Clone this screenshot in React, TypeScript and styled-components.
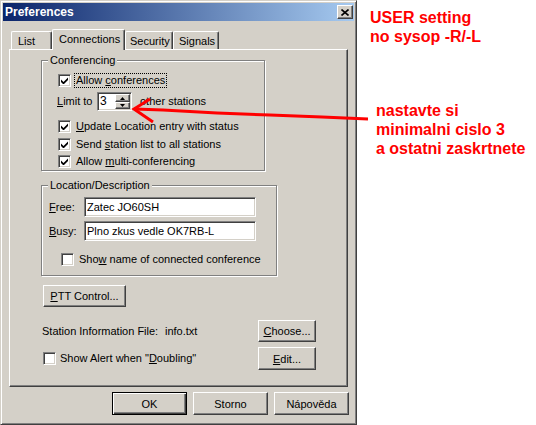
import React from "react";
import styled, { createGlobalStyle, css } from "styled-components";

const face = "#d4d0c8";

const GlobalStyle = createGlobalStyle`
  html, body {
    margin: 0;
    padding: 0;
    background: #fff;
  }
  body {
    font-family: "Liberation Sans", Arial, sans-serif;
    font-size: 11px;
    color: #000;
  }
`;

const raised = css`
  border: 1px solid;
  border-color: #fff #404040 #404040 #fff;
  box-shadow: inset -1px -1px 0 #808080;
`;

const sunken = css`
  border: 1px solid;
  border-color: #808080 #fff #fff #808080;
  box-shadow: inset 1px 1px 0 #404040, inset -1px -1px 0 ${face};
`;

const Page = styled.div`
  position: relative;
  display: flex;
  width: 536px;
  height: 425px;
  overflow: hidden;
`;

const Window = styled.div`
  box-sizing: border-box;
  width: 357px;
  height: 425px;
  flex: none;
  padding: 2px;
  background: ${face};
  border: 1px solid;
  border-color: ${face} #404040 #404040 ${face};
  box-shadow: inset 1px 1px 0 #fff, inset -1px -1px 0 #808080;
  display: flex;
  flex-direction: column;
`;

const TitleBar = styled.div`
  height: 18px;
  display: flex;
  align-items: center;
  justify-content: space-between;
  padding: 0 1px 0 2px;
  background: linear-gradient(to right, #0a246a, #a6caf0);
`;

const Title = styled.span`
  color: #fff;
  font-weight: bold;
  font-size: 12px;
`;

const CloseButton = styled.div`
  box-sizing: border-box;
  width: 16px;
  height: 14px;
  background: ${face};
  ${raised};
  display: flex;
  align-items: center;
  justify-content: center;
`;

const Body = styled.div`
  display: flex;
  flex-direction: column;
  padding: 8px 6px 0 6px;
`;

const TabStrip = styled.div`
  display: flex;
  align-items: flex-end;
  height: 20px;
  padding-left: 2px;
`;

const Tab = styled.div<{ $w: number; $active?: boolean; $pad: number }>`
  box-sizing: border-box;
  width: ${(p) => p.$w}px;
  height: ${(p) => (p.$active ? 21 : 18)}px;
  margin-bottom: ${(p) => (p.$active ? -1 : 0)}px;
  position: relative;
  z-index: ${(p) => (p.$active ? 1 : 0)};
  padding-left: ${(p) => p.$pad}px;
  padding-bottom: ${(p) => (p.$active ? 2 : 0)}px;
  display: flex;
  align-items: center;
  background: ${face};
  border-top: 1px solid #fff;
  border-left: 1px solid #fff;
  border-right: 1px solid #404040;
  box-shadow: inset -1px 0 0 #808080;
  border-radius: 2px 2px 0 0;
`;

const Panel = styled.div`
  box-sizing: border-box;
  height: 338px;
  padding: 10px 0 0 31px;
  display: flex;
  flex-direction: column;
  align-items: flex-start;
  border-top: 1px solid #fff;
  border-left: 1px solid #fff;
  border-right: 1px solid #404040;
  border-bottom: 1px solid #404040;
  box-shadow: inset -1px -1px 0 #808080;
`;

const GroupBox = styled.div<{ $w: number; $h: number; $top?: number }>`
  position: relative;
  box-sizing: border-box;
  width: ${(p) => p.$w}px;
  height: ${(p) => p.$h}px;
  margin-top: ${(p) => p.$top ?? 0}px;
  border: 1px solid #808080;
  box-shadow: inset 1px 1px 0 #fff, 1px 1px 0 #fff;
  display: flex;
  flex-direction: column;
  align-items: flex-start;
`;

const Legend = styled.span`
  position: absolute;
  top: -7px;
  left: 6px;
  padding: 0 2px;
  line-height: 13px;
  background: ${face};
`;

const ConfBody = styled.div`
  padding: 13px 0 0 16px;
  display: flex;
  flex-direction: column;
  align-items: flex-start;
`;

const Row = styled.div<{ $top?: number; $left?: number; $gap?: number }>`
  display: flex;
  align-items: center;
  min-height: 13px;
  margin-top: ${(p) => p.$top ?? 0}px;
  margin-left: ${(p) => p.$left ?? 0}px;
  gap: ${(p) => p.$gap ?? 5}px;
  line-height: 13px;
  white-space: nowrap;
`;

const Focus = styled.span`
  outline: 1px dotted #000;
  outline-offset: 0;
  padding: 0 1px;
  margin-left: -1px;
  line-height: 13px;
`;

const Box = styled.span`
  box-sizing: border-box;
  width: 13px;
  height: 13px;
  flex: none;
  background: #fff;
  ${sunken};
  display: flex;
  align-items: center;
  justify-content: center;
`;

const LimitLabel = styled.span`
  width: 40px;
  margin-left: -1px;
`;

const Spin = styled.div`
  box-sizing: border-box;
  width: 35px;
  height: 19px;
  background: #fff;
  ${sunken};
  display: flex;
  align-items: stretch;
  margin-right: 8px;
`;

const SpinValue = styled.span`
  flex: 1;
  padding-left: 2px;
  font-size: 12px;
  display: flex;
  align-items: center;
`;

const SpinButtons = styled.div`
  display: flex;
  flex-direction: column;
  width: 15px;
  margin: 1px 1px 1px 0;
`;

const SpinButton = styled.div<{ $h: number }>`
  box-sizing: border-box;
  height: ${(p) => p.$h}px;
  background: ${face};
  ${raised};
  display: flex;
  align-items: center;
  justify-content: center;
`;

const LocBody = styled.div`
  padding: 11px 0 0 7px;
  display: flex;
  flex-direction: column;
  align-items: flex-start;
`;

const FieldRow = styled.div<{ $top?: number }>`
  display: flex;
  align-items: center;
  margin-top: ${(p) => p.$top ?? 0}px;
`;

const FieldLabel = styled.span`
  width: 35px;
`;

const TextField = styled.input`
  box-sizing: border-box;
  width: 172px;
  height: 20px;
  margin: 0;
  padding: 0 2px;
  background: #fff;
  ${sunken};
  font-family: "Liberation Sans", Arial, sans-serif;
  font-size: 11px;
  color: #000;
  outline: none;
`;

const Button = styled.button<{ $w: number; $h: number; $top?: number; $left?: number; $default?: boolean }>`
  box-sizing: border-box;
  width: ${(p) => p.$w}px;
  height: ${(p) => p.$h}px;
  margin: ${(p) => p.$top ?? 0}px 0 0 ${(p) => p.$left ?? 0}px;
  padding: 0;
  background: ${face};
  font-family: "Liberation Sans", Arial, sans-serif;
  font-size: 11px;
  color: #000;
  ${(p) =>
    p.$default
      ? css`
          border: 1px solid #000;
          box-shadow: inset 1px 1px 0 #fff, inset -1px -1px 0 #404040, inset -2px -2px 0 #808080;
        `
      : raised};
`;

const ActionRow = styled.div<{ $top: number; $h: number }>`
  display: grid;
  grid-template-columns: 217px 58px;
  align-items: center;
  height: ${(p) => p.$h}px;
  margin-top: ${(p) => p.$top}px;
`;

const InfoLine = styled.div`
  display: flex;
  margin-left: 1px;
`;

const InfoLabel = styled.span`
  width: 123px;
`;

const Footer = styled.div`
  display: flex;
  justify-content: flex-end;
  gap: 6px;
  margin: 5px -1px 0 0;
`;

const Notes = styled.div`
  flex: 1;
  padding: 8px 0 0 13px;
  color: #f00;
  font-family: "Liberation Sans", Arial, sans-serif;
  font-weight: bold;
  font-size: 16px;
  line-height: 19px;
`;

const Note = styled.div<{ $top?: number; $left?: number }>`
  margin-top: ${(p) => p.$top ?? 0}px;
  margin-left: ${(p) => p.$left ?? 0}px;
  white-space: nowrap;
`;

const Overlay = styled.svg`
  position: absolute;
  left: 0;
  top: 0;
  pointer-events: none;
`;

const Check = () => (
  <svg width="7" height="7" viewBox="0 0 7 7">
    <polygon points="0,2.5 2.5,5 7,0.5 7,3 2.5,7.5 0,5" fill="#000" />
  </svg>
);

const Checkbox = ({ checked }: { checked?: boolean }) => <Box>{checked && <Check />}</Box>;

const Arrow = ({ up }: { up?: boolean }) => (
  <svg width="5" height="3" viewBox="0 0 5 3">
    <polygon points={up ? "2.5,0 5,3 0,3" : "0,0 5,0 2.5,3"} fill="#000" />
  </svg>
);

export default function App() {
  return (
    <Page>
      <GlobalStyle />
      <Window>
        <TitleBar>
          <Title>Preferences</Title>
          <CloseButton>
            <svg width="8" height="7" viewBox="0 0 8 7">
              <path d="M0.5 0.5 L7.5 6.5 M7.5 0.5 L0.5 6.5" stroke="#000" strokeWidth="1.6" />
            </svg>
          </CloseButton>
        </TitleBar>
        <Body>
          <TabStrip>
            <Tab $w={41} $pad={6}>List</Tab>
            <Tab $w={73} $pad={6} $active>Connections</Tab>
            <Tab $w={48} $pad={4}>Security</Tab>
            <Tab $w={46} $pad={5}>Signals</Tab>
          </TabStrip>
          <Panel>
            <GroupBox $w={224} $h={111}>
              <Legend>Conferencing</Legend>
              <ConfBody>
                <Row>
                  <Checkbox checked />
                  <Focus>
                    Allow <u>c</u>onferences
                  </Focus>
                </Row>
                <Row $top={5} $gap={0}>
                  <LimitLabel>
                    <u>L</u>imit to
                  </LimitLabel>
                  <Spin>
                    <SpinValue>3</SpinValue>
                    <SpinButtons>
                      <SpinButton $h={8}>
                        <Arrow up />
                      </SpinButton>
                      <SpinButton $h={7}>
                        <Arrow />
                      </SpinButton>
                    </SpinButtons>
                  </Spin>
                  <span>other stations</span>
                </Row>
                <Row $top={9}>
                  <Checkbox checked />
                  <span>
                    <u>U</u>pdate Location entry with status
                  </span>
                </Row>
                <Row $top={5}>
                  <Checkbox checked />
                  <span>
                    Send <u>s</u>tation list to all stations
                  </span>
                </Row>
                <Row $top={4}>
                  <Checkbox checked />
                  <span>
                    Allow <u>m</u>ulti-conferencing
                  </span>
                </Row>
              </ConfBody>
            </GroupBox>
            <GroupBox $w={236} $h={91} $top={14}>
              <Legend>Location/Description</Legend>
              <LocBody>
                <FieldRow>
                  <FieldLabel>
                    <u>F</u>ree:
                  </FieldLabel>
                  <TextField readOnly value="Zatec JO60SH" />
                </FieldRow>
                <FieldRow $top={4}>
                  <FieldLabel>
                    <u>B</u>usy:
                  </FieldLabel>
                  <TextField readOnly value="Plno zkus vedle OK7RB-L" />
                </FieldRow>
                <Row $top={12} $left={12}>
                  <Checkbox />
                  <span>
                    Sho<u>w</u> name of connected conference
                  </span>
                </Row>
              </LocBody>
            </GroupBox>
            <Button $w={83} $h={22} $top={9} $left={2}>
              <u>P</u>TT Control...
            </Button>
            <ActionRow $top={13} $h={22}>
              <InfoLine>
                <InfoLabel>Station Information File:</InfoLabel>
                <span>info.txt</span>
              </InfoLine>
              <Button $w={58} $h={22}>
                <u>C</u>hoose...
              </Button>
            </ActionRow>
            <ActionRow $top={5} $h={23}>
              <Row $left={2} $gap={4}>
                <Checkbox />
                <span>
                  Show Alert when "<u>D</u>oubling"
                </span>
              </Row>
              <Button $w={58} $h={23}>
                <u>E</u>dit...
              </Button>
            </ActionRow>
          </Panel>
          <Footer>
            <Button $w={75} $h={23} $default>
              OK
            </Button>
            <Button $w={75} $h={23}>
              Storno
            </Button>
            <Button $w={75} $h={23}>
              Nápověda
            </Button>
          </Footer>
        </Body>
      </Window>
      <Notes>
        <Note>USER setting</Note>
        <Note>no sysop -R/-L</Note>
        <Note $top={55} $left={6}>
          nastavte si
        </Note>
        <Note $left={6}>minimalni cislo 3</Note>
        <Note $left={6}>a ostatni zaskrtnete</Note>
      </Notes>
      <Overlay width="536" height="425" viewBox="0 0 536 425">
        <polyline
          points="134,109 163,110 217,113 270,115 322,117 368,119"
          fill="none"
          stroke="#f00"
          strokeWidth="3"
        />
        <polyline points="150,99 134,109 153,122" fill="none" stroke="#f00" strokeWidth="3" />
      </Overlay>
    </Page>
  );
}
